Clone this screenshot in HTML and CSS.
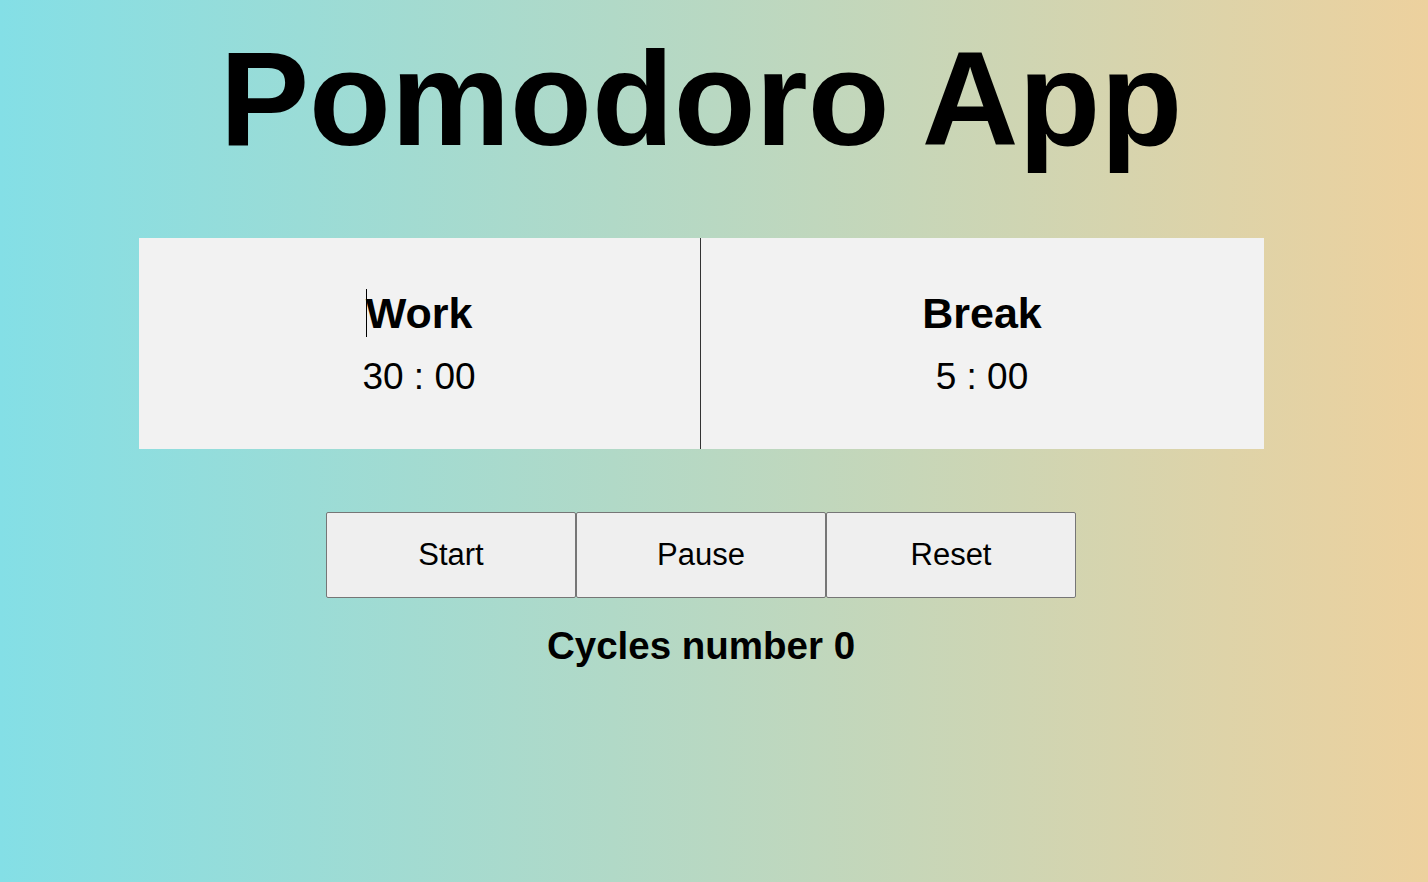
FILE: index.html
```html
<!DOCTYPE html>
<html lang="en">
<head>
<meta charset="utf-8">
<title>Pomodoro App</title>
<link rel="stylesheet" href="styles.css">
</head>
<body>
<main class="app">
  <h1 class="title">Pomodoro App</h1>
  <section class="timers">
    <div class="timer timer-work">
      <h2 class="timer-label caret">Work</h2>
      <p class="timer-time">30 : 00</p>
    </div>
    <div class="timer">
      <h2 class="timer-label">Break</h2>
      <p class="timer-time">5 : 00</p>
    </div>
  </section>
  <div class="controls">
    <button class="btn">Start</button>
    <button class="btn">Pause</button>
    <button class="btn">Reset</button>
  </div>
  <p class="cycles">Cycles number 0</p>
</main>
</body>
</html>
```
FILE: styles.css
```css
html, body {
  margin: 0;
  padding: 0;
  height: 100%;
}
body {
  background: linear-gradient(to right, #84dfe6 0%, #edd19e 100%);
  font-family: "Liberation Sans", Arial, sans-serif;
  color: #000;
}
.app {
  width: 1402px;
  display: flex;
  flex-direction: column;
  align-items: center;
}
.title {
  margin: 22px 0 0 0;
  font-size: 134px;
  font-weight: 700;
  line-height: normal;
}
.timers {
  margin-top: 63px;
  width: 1125px;
  height: 211px;
  display: flex;
  background: #f2f2f2;
}
.timer {
  flex: 1;
  display: flex;
  flex-direction: column;
  align-items: center;
  justify-content: center;
  gap: 18px;
  box-sizing: border-box;
}
.timer-work {
  flex: none;
  width: 562px;
  border-right: 1px solid #333;
}
.timer-label {
  margin: 0;
  font-size: 43px;
  font-weight: 700;
  line-height: normal;
}
.caret {
  position: relative;
}
.caret::before {
  content: "";
  position: absolute;
  left: 0;
  top: 0;
  width: 1px;
  height: 48px;
  background: #000;
}
.timer-time {
  margin: 0;
  font-size: 37px;
  line-height: normal;
}
.controls {
  margin-top: 63px;
  display: flex;
}
.btn {
  width: 250px;
  height: 86px;
  margin: 0;
  padding: 0;
  background: #efefef;
  border: 1px solid #767676;
  border-radius: 2px;
  font-family: "Liberation Sans", Arial, sans-serif;
  font-size: 31px;
  color: #000;
}
.cycles {
  margin: 26px 0 0 0;
  font-size: 38.5px;
  font-weight: 700;
  line-height: normal;
}
```
